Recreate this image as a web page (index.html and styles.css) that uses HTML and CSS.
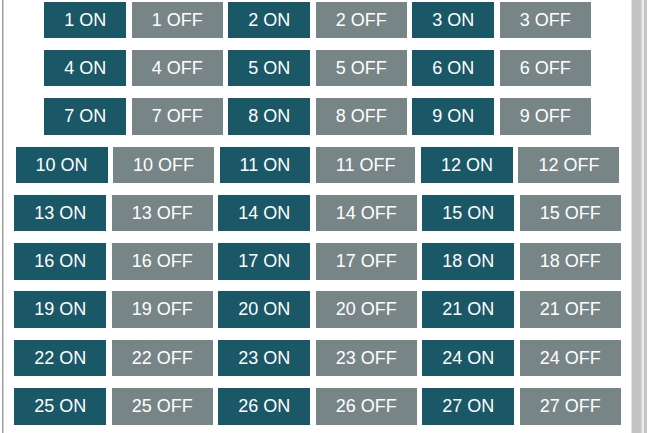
FILE: index.html
```html
<!DOCTYPE html>
<html>
<head>
<meta charset="utf-8">
<link rel="stylesheet" href="styles.css">
</head>
<body>
<div class="page">
  <div class="frame-edge"></div>
  <div class="content">
    <div class="row"><button class="btn on">1 ON</button><button class="btn off">1 OFF</button><button class="btn on">2 ON</button><button class="btn off">2 OFF</button><button class="btn on">3 ON</button><button class="btn off">3 OFF</button></div>
    <div class="row"><button class="btn on">4 ON</button><button class="btn off">4 OFF</button><button class="btn on">5 ON</button><button class="btn off">5 OFF</button><button class="btn on">6 ON</button><button class="btn off">6 OFF</button></div>
    <div class="row"><button class="btn on">7 ON</button><button class="btn off">7 OFF</button><button class="btn on">8 ON</button><button class="btn off">8 OFF</button><button class="btn on">9 ON</button><button class="btn off">9 OFF</button></div>
    <div class="row"><button class="btn on">10 ON</button><button class="btn off">10 OFF</button><button class="btn on">11 ON</button><button class="btn off">11 OFF</button><button class="btn on">12 ON</button><button class="btn off">12 OFF</button></div>
    <div class="row"><button class="btn on">13 ON</button><button class="btn off">13 OFF</button><button class="btn on">14 ON</button><button class="btn off">14 OFF</button><button class="btn on">15 ON</button><button class="btn off">15 OFF</button></div>
    <div class="row"><button class="btn on">16 ON</button><button class="btn off">16 OFF</button><button class="btn on">17 ON</button><button class="btn off">17 OFF</button><button class="btn on">18 ON</button><button class="btn off">18 OFF</button></div>
    <div class="row"><button class="btn on">19 ON</button><button class="btn off">19 OFF</button><button class="btn on">20 ON</button><button class="btn off">20 OFF</button><button class="btn on">21 ON</button><button class="btn off">21 OFF</button></div>
    <div class="row"><button class="btn on">22 ON</button><button class="btn off">22 OFF</button><button class="btn on">23 ON</button><button class="btn off">23 OFF</button><button class="btn on">24 ON</button><button class="btn off">24 OFF</button></div>
    <div class="row"><button class="btn on">25 ON</button><button class="btn off">25 OFF</button><button class="btn on">26 ON</button><button class="btn off">26 OFF</button><button class="btn on">27 ON</button><button class="btn off">27 OFF</button></div>
  </div>
  <div class="scrollbar">
    <div class="sb-track"></div>
    <div class="sb-line"></div>
    <div class="sb-rail"></div>
  </div>
</div>
</body>
</html>
```
FILE: styles.css
```css
html, body {
  margin: 0;
  padding: 0;
  background: #ffffff;
}

.page {
  display: flex;
  height: 433px;
  overflow: hidden;
  padding-left: 2px;
  box-sizing: border-box;
}

.frame-edge {
  width: 2px;
  background: linear-gradient(to right, #9c9c9c 0 1px, #cfcfcf 1px 2px);
  flex: none;
}

.content {
  flex: 1;
  display: flex;
  flex-direction: column;
  gap: 11.8px;
  padding-top: 1.7px;
}

.row {
  display: flex;
  justify-content: center;
  gap: 5.5px;
}

.btn {
  font-family: "Liberation Sans", Arial, sans-serif;
  font-size: 18px;
  color: #ffffff;
  height: 36.5px;
  line-height: 36.5px;
  padding: 0 20px;
  border: none;
  margin: 0;
  box-sizing: border-box;
  white-space: nowrap;
}

.on {
  background: #1b5867;
}

.off {
  background: #788587;
}

.scrollbar {
  flex: none;
  width: 19px;
  display: flex;
  margin-right: 0;
}

.sb-track {
  width: 11px;
  background: linear-gradient(to right, #e2e2e2 0 1px, #c3c3c3 1px 10px, #d6d6d6 10px);
}

.sb-line {
  width: 2px;
  background: #ebebeb;
}

.sb-rail {
  width: 3px;
  background: #c4c4c4;
}
```
